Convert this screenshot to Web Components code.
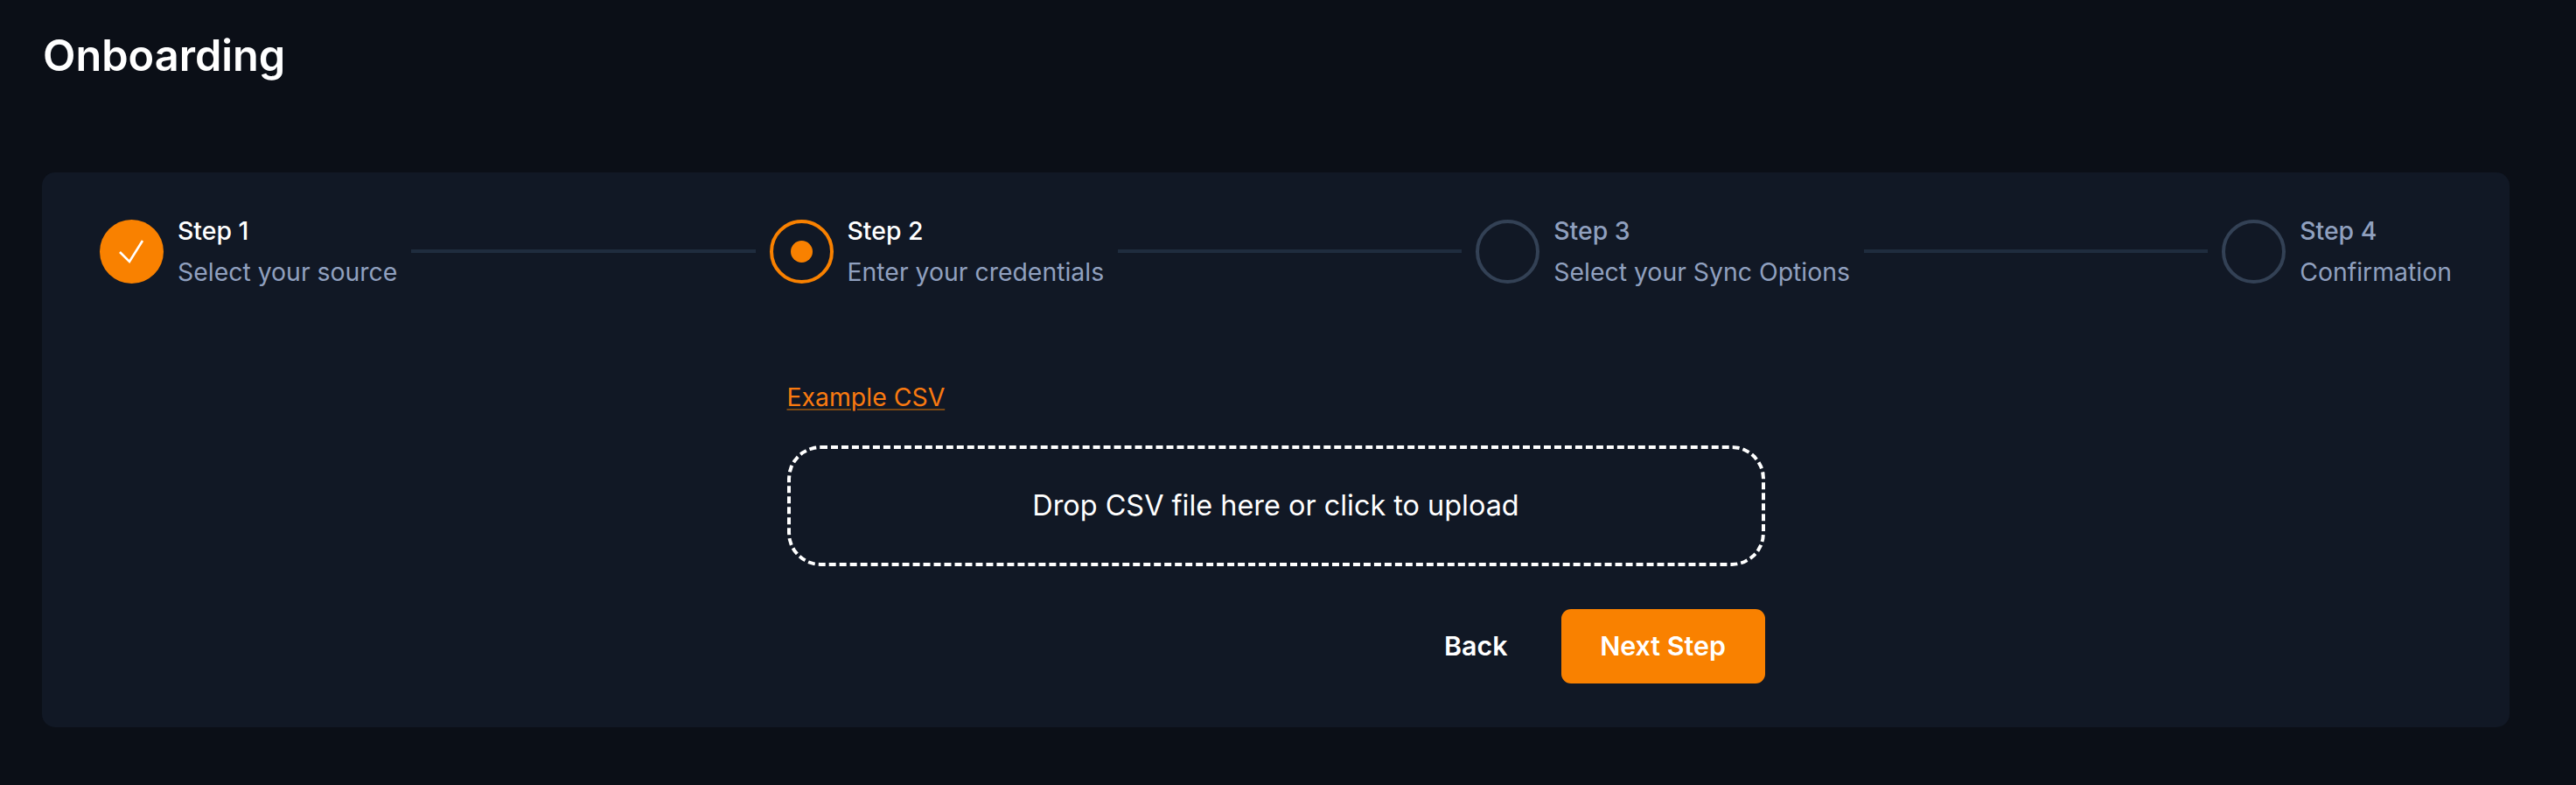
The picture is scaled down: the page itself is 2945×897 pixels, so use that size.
<!DOCTYPE html>
<html><head><meta charset="utf-8">
<style>
html,body{margin:0;padding:0;background:#0b0f17;height:100%}
body{font-family:Inter,"Noto Sans",sans-serif;color:#fff;overflow:hidden}
</style></head><body>
<onboarding-page>
  <page-title>Onboarding</page-title>
  <onboarding-card>
    <step-bar>
      <step-item state="done" title-text="Step 1" sub="Select your source"></step-item>
      <step-line></step-line>
      <step-item state="active" title-text="Step 2" sub="Enter your credentials"></step-item>
      <step-line></step-line>
      <step-item state="todo" title-text="Step 3" sub="Select your Sync Options"></step-item>
      <step-line></step-line>
      <step-item state="todo" title-text="Step 4" sub="Confirmation"></step-item>
    </step-bar>
    <upload-form></upload-form>
  </onboarding-card>
</onboarding-page>
<script>
function def(name, css, html, init){
  customElements.define(name, class extends HTMLElement{
    constructor(){super();const s=this.attachShadow({mode:'open'});s.innerHTML='<style>'+css+'</style>'+html;}
    connectedCallback(){if(init)init.call(this,this.shadowRoot);}
  });
}
def('onboarding-page',':host{display:block;padding:0 76px 0 48px;height:897px;box-sizing:border-box}','<slot></slot>');
def('page-title',':host{display:block;font-size:48.7px;font-weight:600;line-height:62px;padding:33px 0 0 1px;height:197px;box-sizing:border-box;color:#fff}','<slot></slot>');
def('onboarding-card',':host{display:block;background:#111825;border-radius:15px;padding:43px 66px 50px;box-sizing:border-box}','<slot></slot>');
def('step-bar',':host{display:flex;align-items:center;gap:16px}','<slot></slot>');
def('step-line',':host{display:block;flex:1;height:4px;background:#1f2c3e}','');
def('step-item',`:host{display:flex;align-items:center;gap:16px;flex:none}
.c{width:73px;height:73px;border-radius:50%;box-sizing:border-box;display:flex;align-items:center;justify-content:center;flex:none}
.done{background:#f98100}
.active{border:4px solid #f98100}
.todo{border:4px solid #334155}
.dot{width:25px;height:25px;border-radius:50%;background:#f98100}
svg{display:block}
.t{font-size:28.4px;line-height:47px;font-weight:500;color:#fff;white-space:nowrap}
.s{font-size:28.4px;line-height:47px;font-weight:400;color:#90a0bf;white-space:nowrap}
.todo-t{color:#90a0bf}
`,`<div class="c"></div><div class="txt"><div class="t"></div><div class="s"></div></div>`,function(r){
  const st=this.getAttribute('state');const c=r.querySelector('.c');c.classList.add(st);
  r.querySelector('.t').textContent=this.getAttribute('title-text');
  r.querySelector('.s').textContent=this.getAttribute('sub');
  if(st==='todo')r.querySelector('.t').classList.add('todo-t');
  if(st==='active')c.innerHTML='<div class="dot"></div>';
  if(st==='done')c.innerHTML='<svg width="73" height="73" viewBox="0 0 73 73" fill="none"><path d="M23 37 L34 48 L49 24" stroke="#fff" stroke-width="2.6"/></svg>';
});
def('upload-form',`:host{display:block;width:1118px;margin:96px auto 0}
a{display:inline-block;font-size:28.4px;line-height:47px;color:#f97a10;text-decoration:underline;text-decoration-thickness:2px;text-underline-offset:3px;text-decoration-color:rgba(249,129,0,.45)}
.link{height:78.5px}
.drop{height:138px;box-sizing:border-box;border:4px dashed #fff;border-radius:38px;display:flex;align-items:center;justify-content:center;font-size:32.4px;color:#fff}
.act{display:flex;justify-content:flex-end;align-items:center;gap:61px;margin-top:49px}
.back{font-size:30.4px;font-weight:600;color:#fff}
.next{width:233px;height:85px;border-radius:11px;background:#f98100;color:#fff;font-size:30.4px;font-weight:600;display:flex;align-items:center;justify-content:center}
`,`<div class="link"><a href="#">Example CSV</a></div><div class="drop">Drop CSV file here or click to upload</div><div class="act"><div class="back">Back</div><div class="next">Next Step</div></div>`);
</script>
</body></html>
